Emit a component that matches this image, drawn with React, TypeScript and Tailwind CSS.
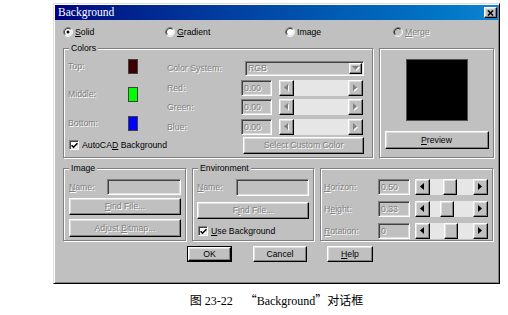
import React from "react";

const raised =
  "border border-t-white border-l-white border-r-black border-b-black shadow-[inset_-1px_-1px_0_#808080,inset_1px_1px_0_#dfdfdf]";
const sunken =
  "border border-t-[#808080] border-l-[#808080] border-r-white border-b-white shadow-[inset_1px_1px_0_#404040,inset_-1px_-1px_0_#dfdfdf]";
const dim = "text-[#808080] [text-shadow:1px_1px_0_#fff]";

function Radio({ checked, disabled }: { checked?: boolean; disabled?: boolean }) {
  return (
    <svg width="10" height="10" viewBox="0 0 12 12" className="shrink-0">
      <circle cx="6" cy="6" r="5" fill={disabled ? "#c0c0c0" : "#fff"} />
      <path d="M9.89 2.11 A5.5 5.5 0 0 0 2.11 9.89" fill="none" stroke="#808080" />
      <path d="M9.89 2.11 A5.5 5.5 0 0 1 2.11 9.89" fill="none" stroke="#fff" />
      <path d="M9.18 2.82 A4.5 4.5 0 0 0 2.82 9.18" fill="none" stroke="#000" />
      <path d="M9.18 2.82 A4.5 4.5 0 0 1 2.82 9.18" fill="none" stroke="#dfdfdf" />
      {checked && <circle cx="6" cy="6" r="1.8" fill={disabled ? "#808080" : "#000"} />}
    </svg>
  );
}

function Check() {
  return (
    <div className={`${sunken} w-[10px] h-[10px] bg-white flex items-center justify-center shrink-0`}>
      <svg width="7" height="7" viewBox="0 0 7 7">
        <path d="M0.6 3.2 L2.6 5.2 L6.4 1.2" fill="none" stroke="#000" strokeWidth="1.6" />
      </svg>
    </div>
  );
}

function Tri({ dir, disabled }: { dir: "l" | "r" | "d"; disabled?: boolean }) {
  const pts = dir === "l" ? "4,0 0,3.5 4,7" : dir === "r" ? "0,0 4,3.5 0,7" : "0,0 7,0 3.5,4";
  const box = dir === "d" ? { w: 8, h: 5 } : { w: 5, h: 8 };
  return (
    <svg width={box.w} height={box.h} viewBox={`0 0 ${box.w} ${box.h}`}>
      {disabled && <polygon points={pts} fill="#fff" transform="translate(1 1)" />}
      <polygon points={pts} fill={disabled ? "#808080" : "#000"} />
    </svg>
  );
}

function HScroll({ w, thumbLeft, disabled }: { w: string; thumbLeft?: string; disabled?: boolean }) {
  return (
    <div className={`flex h-[16px] ${w}`}>
      <div className={`${raised} w-[15px] h-full bg-[#c0c0c0] flex items-center justify-center`}>
        <Tri dir="l" disabled={disabled} />
      </div>
      <div className="flex-1 h-full bg-[#e6e6e6] flex">
        {thumbLeft && (
          <>
            <div className={thumbLeft} />
            <div className={`${raised} w-[14px] h-full bg-[#c0c0c0]`} />
          </>
        )}
      </div>
      <div className={`${raised} w-[15px] h-full bg-[#c0c0c0] flex items-center justify-center`}>
        <Tri dir="r" disabled={disabled} />
      </div>
    </div>
  );
}

function Field({ w, h, value }: { w: string; h: string; value?: string }) {
  return (
    <div className={`${sunken} ${w} ${h} bg-[#c0c0c0] flex items-center pl-[2px] ${dim}`}>
      {value}
    </div>
  );
}

function Btn({
  cls,
  children,
  disabled,
  def,
}: {
  cls: string;
  children: React.ReactNode;
  disabled?: boolean;
  def?: boolean;
}) {
  const tone = disabled ? dim : "text-black";
  if (def)
    return (
      <div className={`${cls} border border-black`}>
        <div className={`${raised} w-full h-full bg-[#c0c0c0] flex items-center justify-center ${tone}`}>
          <span>{children}</span>
        </div>
      </div>
    );
  return (
    <div className={`${raised} ${cls} bg-[#c0c0c0] flex items-center justify-center ${tone}`}>
      <span>{children}</span>
    </div>
  );
}

function Group({ cls, label, children }: { cls: string; label?: string; children: React.ReactNode }) {
  return (
    <div className={`relative ${cls} border border-[#808080] shadow-[inset_1px_1px_0_#fff,1px_1px_0_#fff]`}>
      {label && (
        <span className="absolute -top-[6px] left-[5px] px-[2px] bg-[#c0c0c0] leading-[10px]">{label}</span>
      )}
      {children}
    </div>
  );
}

function SwatchRow({ label, color }: { label: string; color: string }) {
  return (
    <div className="flex items-center h-[15px]">
      <span className={`w-[60px] ${dim}`}>{label}</span>
      <div className={`w-[10px] h-[15px] border border-[#404040] ${color}`} />
    </div>
  );
}

function ColorRow({ label, cls }: { label: string; cls: string }) {
  return (
    <div className={`flex items-center h-[16px] ${cls}`}>
      <span className={`w-[74px] ${dim}`}>{label}</span>
      <Field w="w-[31px]" h="h-[16px]" value="0.00" />
      <div className="ml-[7px]">
        <HScroll w="w-[84px]" disabled />
      </div>
    </div>
  );
}

function EnvRow({ label, value, thumb, cls }: { label: React.ReactNode; value: string; thumb: string; cls: string }) {
  return (
    <div className={`flex items-center h-[16px] ${cls}`}>
      <span className={`w-[54px] ${dim}`}>{label}</span>
      <Field w="w-[32px]" h="h-[16px]" value={value} />
      <div className="ml-[5px]">
        <HScroll w="w-[73px]" thumbLeft={thumb} />
      </div>
    </div>
  );
}

export default function App() {
  return (
    <div className="w-[508px] h-[315px] bg-white overflow-hidden font-['Liberation_Sans',Arial,sans-serif] text-[8.7px] leading-none text-black">
      <div className="ml-[53px] mt-[3px] w-[447px] h-[281px] bg-[#c0c0c0] border border-t-[#dfdfdf] border-l-[#dfdfdf] border-r-black border-b-black shadow-[inset_1px_1px_0_#fff,inset_-1px_-1px_0_#808080] p-[1px] flex flex-col">
        {/* title bar */}
        <div className="h-[15px] shrink-0 flex items-center justify-between pl-[3px] pr-[1px] bg-linear-to-r from-[#000080] to-[#1084d0]">
          <span className="text-white font-['Liberation_Serif',serif] text-[11.5px]">Background</span>
          <div className={`${raised} w-[13px] h-[11px] bg-[#c0c0c0] flex items-center justify-center`}>
            <svg width="7" height="6" viewBox="0 0 8 7">
              <path d="M1 0.5 L7 6.5 M7 0.5 L1 6.5" stroke="#000" strokeWidth="1.7" />
            </svg>
          </div>
        </div>

        {/* background type */}
        <div className="mt-[4px] h-[16px] flex items-center pl-[8px]">
          <div className="w-[102px] flex items-center gap-[2px]">
            <Radio checked />
            <span>
              <u>S</u>olid
            </span>
          </div>
          <div className="w-[120px] flex items-center gap-[2px]">
            <Radio />
            <span>
              <u>G</u>radient
            </span>
          </div>
          <div className="w-[108px] flex items-center gap-[2px]">
            <Radio />
            <span>Image</span>
          </div>
          <div className="flex items-center gap-[2px]">
            <Radio disabled />
            <span className={dim}>
              <u>M</u>erge
            </span>
          </div>
        </div>

        {/* colors + preview */}
        <div className="mt-[8px] ml-[8px] flex gap-[6px]">
          <Group cls="w-[310px] h-[110px]" label="Colors">
            <div className="flex pt-[10px] pl-[4px]">
              <div className="w-[99px] flex flex-col">
                <SwatchRow label="Top:" color="bg-[#3c0000]" />
                <div className="mt-[13px]">
                  <SwatchRow label="Middle:" color="bg-[#00ff00]" />
                </div>
                <div className="mt-[14px]">
                  <SwatchRow label="Bottom:" color="bg-[#0000ff]" />
                </div>
                <div className="mt-[9px] ml-[1px] flex items-center gap-[3px]">
                  <Check />
                  <span>
                    AutoCA<u>D</u> Background
                  </span>
                </div>
              </div>
              <div className="flex flex-col pt-[2px]">
                <div className="flex items-center h-[15px]">
                  <span className={`w-[78px] ${dim}`}>Color System:</span>
                  <div className={`${sunken} w-[119px] h-[15px] bg-[#c0c0c0] flex items-center justify-between pl-[2px] pr-[1px]`}>
                    <span className={dim}>RGB</span>
                    <div className={`${raised} w-[13px] h-[11px] bg-[#c0c0c0] flex items-center justify-center`}>
                      <Tri dir="d" disabled />
                    </div>
                  </div>
                </div>
                <ColorRow label="Red:" cls="mt-[4px]" />
                <ColorRow label="Green:" cls="mt-[3px]" />
                <ColorRow label="Blue:" cls="mt-[4px]" />
                <div className="mt-[2px] ml-[76px]">
                  <Btn cls="w-[121px] h-[17px]" disabled>
                    Select Custom Color
                  </Btn>
                </div>
              </div>
            </div>
          </Group>

          <Group cls="w-[115px] h-[110px]">
            <div className="flex flex-col items-center pt-[10px]">
              <div className="w-[62px] h-[62px] bg-black border border-[#505050]" />
              <div className="mt-[10px]">
                <Btn cls="w-[104px] h-[18px]">
                  <u>P</u>review
                </Btn>
              </div>
            </div>
          </Group>
        </div>

        {/* image / environment / horizon */}
        <div className="mt-[10px] ml-[8px] flex gap-[6px]">
          <Group cls="w-[123px] h-[73px]" label="Image">
            <div className="flex flex-col pt-[10px] pl-[5px]">
              <div className="flex items-center h-[16px]">
                <span className={`w-[38px] ${dim}`}>
                  <u>N</u>ame:
                </span>
                <Field w="w-[74px]" h="h-[16px]" />
              </div>
              <div className="mt-[3px]">
                <Btn cls="w-[112px] h-[17px]" disabled>
                  <u>F</u>ind File...
                </Btn>
              </div>
              <div className="mt-[4px]">
                <Btn cls="w-[112px] h-[18px]" disabled>
                  Adjust <u>B</u>itmap...
                </Btn>
              </div>
            </div>
          </Group>

          <Group cls="w-[122px] h-[73px]" label="Environment">
            <div className="flex flex-col pt-[10px] pl-[4px]">
              <div className="flex items-center h-[17px]">
                <span className={`w-[39px] ${dim}`}>
                  <u>N</u>ame:
                </span>
                <Field w="w-[73px]" h="h-[17px]" />
              </div>
              <div className="mt-[6px]">
                <Btn cls="w-[112px] h-[17px]" disabled>
                  F<u>i</u>nd File...
                </Btn>
              </div>
              <div className="mt-[7px] ml-[1px] flex items-center gap-[3px]">
                <Check />
                <span>
                  <u>U</u>se Background
                </span>
              </div>
            </div>
          </Group>

          <Group cls="w-[173px] h-[73px]">
            <div className="flex flex-col pt-[10px] pl-[3px]">
              <EnvRow label={<><u>H</u>orizon:</>} value="0.50" thumb="w-[13px]" cls="" />
              <EnvRow label={<>H<u>e</u>ight:</>} value="0.33" thumb="w-[10px]" cls="mt-[6px]" />
              <EnvRow label={<><u>R</u>otation:</>} value="0" thumb="w-[14px]" cls="mt-[6px]" />
            </div>
          </Group>
        </div>

        {/* dialog buttons */}
        <div className="mt-[5px] ml-[132px] flex">
          <Btn cls="w-[45px] h-[16px]" def>
            OK
          </Btn>
          <div className="ml-[21px]">
            <Btn cls="w-[54px] h-[16px]">Cancel</Btn>
          </div>
          <div className="ml-[20px]">
            <Btn cls="w-[46px] h-[16px]">
              <u>H</u>elp
            </Btn>
          </div>
        </div>
      </div>

      <div className="mt-[10px] ml-[53px] w-[447px] text-center font-['Liberation_Serif','Noto_Sans_CJK_SC',serif] text-[12px] leading-[12px]">
        <span className="font-['Noto_Sans_CJK_SC',sans-serif]">图</span> 23-22&nbsp;&nbsp;&nbsp;&nbsp;
        <span className="font-['Noto_Sans_CJK_SC',sans-serif]">“</span>Background
        <span className="font-['Noto_Sans_CJK_SC',sans-serif]">”对话框</span>
      </div>
    </div>
  );
}
